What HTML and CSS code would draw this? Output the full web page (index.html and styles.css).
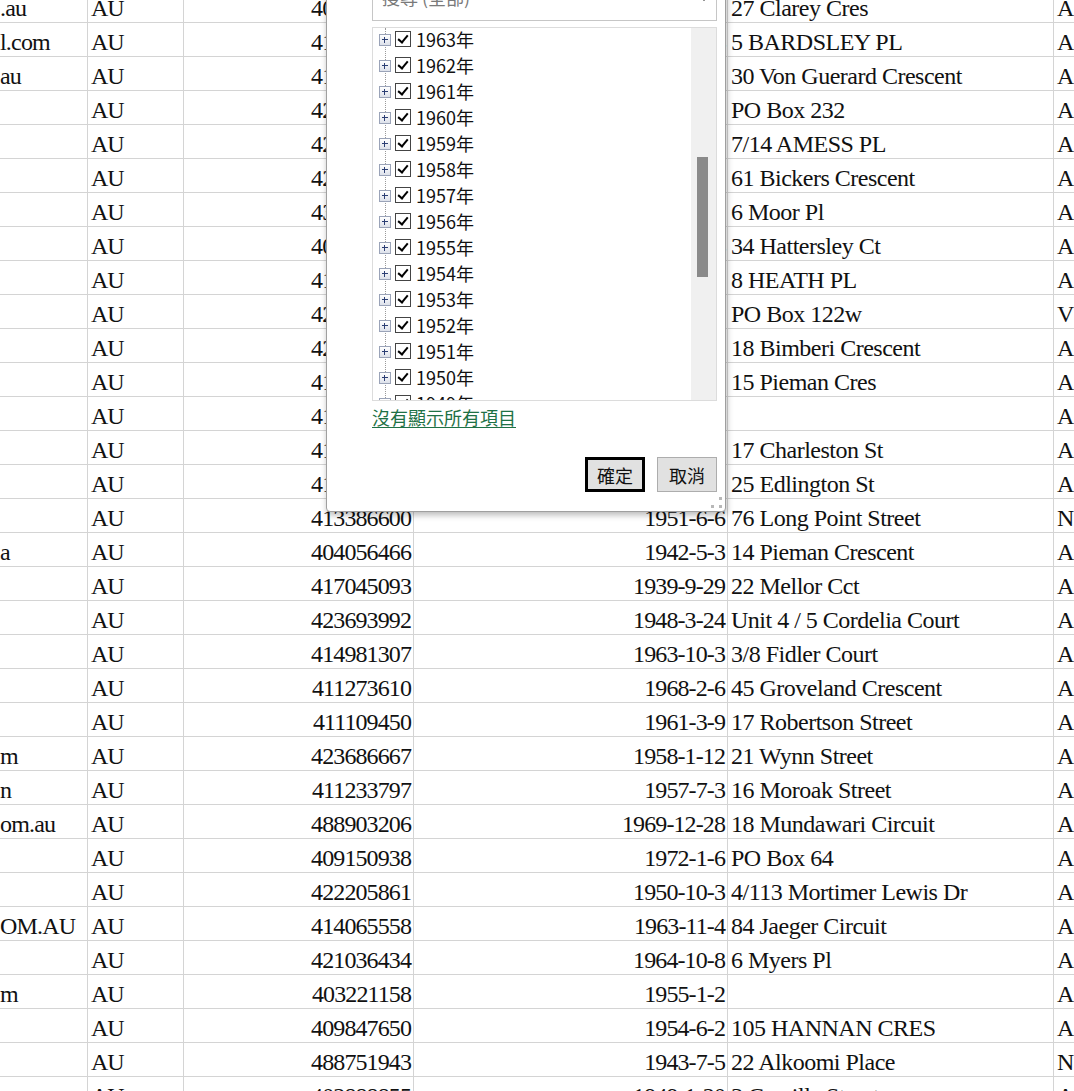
FILE: index.html
```html
<!DOCTYPE html>
<html lang="zh-Hant">
<head>
<meta charset="utf-8">
<title>聯絡人清單</title>
<link rel="stylesheet" href="styles.css">
</head>
<body>
<div class="sheet">
  <div class="row"><div class="c a">.au</div><div class="c b">AU</div><div class="c n">404518872</div><div class="c n">1956-4-11</div><div class="c e">27 Clarey Cres</div><div class="c f">ACT</div></div>
  <div class="row"><div class="c a">l.com</div><div class="c b">AU</div><div class="c n">415208933</div><div class="c n">1960-2-14</div><div class="c e">5 BARDSLEY PL</div><div class="c f">ACT</div></div>
  <div class="row"><div class="c a">au</div><div class="c b">AU</div><div class="c n">418872205</div><div class="c n">1953-8-1</div><div class="c e">30 Von Guerard Crescent</div><div class="c f">ACT</div></div>
  <div class="row"><div class="c a"></div><div class="c b">AU</div><div class="c n">421907546</div><div class="c n">1962-5-19</div><div class="c e">PO Box 232</div><div class="c f">ACT</div></div>
  <div class="row"><div class="c a"></div><div class="c b">AU</div><div class="c n">425310884</div><div class="c n">1958-11-7</div><div class="c e">7/14 AMESS PL</div><div class="c f">ACT</div></div>
  <div class="row"><div class="c a"></div><div class="c b">AU</div><div class="c n">422761390</div><div class="c n">1955-3-22</div><div class="c e">61 Bickers Crescent</div><div class="c f">ACT</div></div>
  <div class="row"><div class="c a"></div><div class="c b">AU</div><div class="c n">431048226</div><div class="c n">1961-7-30</div><div class="c e">6 Moor Pl</div><div class="c f">ACT</div></div>
  <div class="row"><div class="c a"></div><div class="c b">AU</div><div class="c n">409623178</div><div class="c n">1957-9-4</div><div class="c e">34 Hattersley Ct</div><div class="c f">ACT</div></div>
  <div class="row"><div class="c a"></div><div class="c b">AU</div><div class="c n">413550921</div><div class="c n">1950-12-9</div><div class="c e">8 HEATH PL</div><div class="c f">ACT</div></div>
  <div class="row"><div class="c a"></div><div class="c b">AU</div><div class="c n">428144063</div><div class="c n">1963-1-25</div><div class="c e">PO Box 122w</div><div class="c f">VIC</div></div>
  <div class="row"><div class="c a"></div><div class="c b">AU</div><div class="c n">421679305</div><div class="c n">1954-10-16</div><div class="c e">18 Bimberi Crescent</div><div class="c f">ACT</div></div>
  <div class="row"><div class="c a"></div><div class="c b">AU</div><div class="c n">417302558</div><div class="c n">1959-6-2</div><div class="c e">15 Pieman Cres</div><div class="c f">ACT</div></div>
  <div class="row"><div class="c a"></div><div class="c b">AU</div><div class="c n">412885147</div><div class="c n">1952-4-27</div><div class="c e"></div><div class="c f">ACT</div></div>
  <div class="row"><div class="c a"></div><div class="c b">AU</div><div class="c n">414069832</div><div class="c n">1956-8-13</div><div class="c e">17 Charleston St</div><div class="c f">ACT</div></div>
  <div class="row"><div class="c a"></div><div class="c b">AU</div><div class="c n">419237716</div><div class="c n">1960-9-8</div><div class="c e">25 Edlington St</div><div class="c f">ACT</div></div>
  <div class="row"><div class="c a"></div><div class="c b">AU</div><div class="c n">413386600</div><div class="c n">1951-6-6</div><div class="c e">76 Long Point Street</div><div class="c f">NSW</div></div>
  <div class="row"><div class="c a">a</div><div class="c b">AU</div><div class="c n">404056466</div><div class="c n">1942-5-3</div><div class="c e">14 Pieman Crescent</div><div class="c f">ACT</div></div>
  <div class="row"><div class="c a"></div><div class="c b">AU</div><div class="c n">417045093</div><div class="c n">1939-9-29</div><div class="c e">22 Mellor Cct</div><div class="c f">ACT</div></div>
  <div class="row"><div class="c a"></div><div class="c b">AU</div><div class="c n">423693992</div><div class="c n">1948-3-24</div><div class="c e">Unit 4 / 5 Cordelia Court</div><div class="c f">ACT</div></div>
  <div class="row"><div class="c a"></div><div class="c b">AU</div><div class="c n">414981307</div><div class="c n">1963-10-3</div><div class="c e">3/8 Fidler Court</div><div class="c f">ACT</div></div>
  <div class="row"><div class="c a"></div><div class="c b">AU</div><div class="c n">411273610</div><div class="c n">1968-2-6</div><div class="c e">45 Groveland Crescent</div><div class="c f">ACT</div></div>
  <div class="row"><div class="c a"></div><div class="c b">AU</div><div class="c n">411109450</div><div class="c n">1961-3-9</div><div class="c e">17 Robertson Street</div><div class="c f">ACT</div></div>
  <div class="row"><div class="c a">m</div><div class="c b">AU</div><div class="c n">423686667</div><div class="c n">1958-1-12</div><div class="c e">21 Wynn Street</div><div class="c f">ACT</div></div>
  <div class="row"><div class="c a">n</div><div class="c b">AU</div><div class="c n">411233797</div><div class="c n">1957-7-3</div><div class="c e">16 Moroak Street</div><div class="c f">ACT</div></div>
  <div class="row"><div class="c a">om.au</div><div class="c b">AU</div><div class="c n">488903206</div><div class="c n">1969-12-28</div><div class="c e">18 Mundawari Circuit</div><div class="c f">ACT</div></div>
  <div class="row"><div class="c a"></div><div class="c b">AU</div><div class="c n">409150938</div><div class="c n">1972-1-6</div><div class="c e">PO Box 64</div><div class="c f">ACT</div></div>
  <div class="row"><div class="c a"></div><div class="c b">AU</div><div class="c n">422205861</div><div class="c n">1950-10-3</div><div class="c e">4/113 Mortimer Lewis Dr</div><div class="c f">ACT</div></div>
  <div class="row"><div class="c a">OM.AU</div><div class="c b">AU</div><div class="c n">414065558</div><div class="c n">1963-11-4</div><div class="c e">84 Jaeger Circuit</div><div class="c f">ACT</div></div>
  <div class="row"><div class="c a"></div><div class="c b">AU</div><div class="c n">421036434</div><div class="c n">1964-10-8</div><div class="c e">6 Myers Pl</div><div class="c f">ACT</div></div>
  <div class="row"><div class="c a">m</div><div class="c b">AU</div><div class="c n">403221158</div><div class="c n">1955-1-2</div><div class="c e"></div><div class="c f">ACT</div></div>
  <div class="row"><div class="c a"></div><div class="c b">AU</div><div class="c n">409847650</div><div class="c n">1954-6-2</div><div class="c e">105 HANNAN CRES</div><div class="c f">ACT</div></div>
  <div class="row"><div class="c a"></div><div class="c b">AU</div><div class="c n">488751943</div><div class="c n">1943-7-5</div><div class="c e">22 Alkoomi Place</div><div class="c f">NSW</div></div>
  <div class="row"><div class="c a"></div><div class="c b">AU</div><div class="c n">402888855</div><div class="c n">1949-1-20</div><div class="c e">3 Camilla Street</div><div class="c f">ACT</div></div>
</div>

<!-- AutoFilter dropdown for the birth-date column -->
<div class="filter">
  <div class="search">
    <span class="search-text">搜尋 (全部)</span>
    <svg class="search-arrow" width="14" height="10" viewBox="0 0 14 10"><path d="M1 1 L13 1 L7 8 Z" fill="#111"/></svg>
  </div>

  <div class="tree">
    <div class="tree-line"></div>
    <ul class="items">
      <li class="item"><span class="exp"></span><span class="cb"></span><span class="label">1963年</span></li>
      <li class="item"><span class="exp"></span><span class="cb"></span><span class="label">1962年</span></li>
      <li class="item"><span class="exp"></span><span class="cb"></span><span class="label">1961年</span></li>
      <li class="item"><span class="exp"></span><span class="cb"></span><span class="label">1960年</span></li>
      <li class="item"><span class="exp"></span><span class="cb"></span><span class="label">1959年</span></li>
      <li class="item"><span class="exp"></span><span class="cb"></span><span class="label">1958年</span></li>
      <li class="item"><span class="exp"></span><span class="cb"></span><span class="label">1957年</span></li>
      <li class="item"><span class="exp"></span><span class="cb"></span><span class="label">1956年</span></li>
      <li class="item"><span class="exp"></span><span class="cb"></span><span class="label">1955年</span></li>
      <li class="item"><span class="exp"></span><span class="cb"></span><span class="label">1954年</span></li>
      <li class="item"><span class="exp"></span><span class="cb"></span><span class="label">1953年</span></li>
      <li class="item"><span class="exp"></span><span class="cb"></span><span class="label">1952年</span></li>
      <li class="item"><span class="exp"></span><span class="cb"></span><span class="label">1951年</span></li>
      <li class="item"><span class="exp"></span><span class="cb"></span><span class="label">1950年</span></li>
      <li class="item"><span class="exp"></span><span class="cb"></span><span class="label">1949年</span></li>
    </ul>
    <div class="scrollbar"><div class="thumb"></div></div>
  </div>

  <a class="more" href="#">沒有顯示所有項目</a>

  <div class="buttons">
    <button class="btn default">確定</button>
    <button class="btn">取消</button>
  </div>

  <svg class="grip" width="14" height="14" viewBox="0 0 14 14">
    <rect x="9" y="1" width="3" height="3" fill="#b8b8b8"/>
    <rect x="1" y="9" width="3" height="3" fill="#b8b8b8"/>
    <rect x="9" y="9" width="3" height="3" fill="#b8b8b8"/>
  </svg>
</div>
</body>
</html>
```

FILE: styles.css
```css
html, body {
  margin: 0;
  padding: 0;
  background: #fff;
  overflow: hidden;
}

body {
  position: relative;
  width: 1074px;
  height: 1091px;
}

/* ---------- worksheet ---------- */
.sheet {
  margin-top: -11px;
  font-family: "Liberation Serif", "Times New Roman", serif;
  font-size: 24px;
  letter-spacing: -0.5px;
  color: #111;
}

.row {
  display: grid;
  grid-template-columns: 88px 96px 230px 314px 326px 1fr;
  height: 34px;
}

.c {
  box-sizing: border-box;
  height: 34px;
  border-right: 1px solid #d4d4d4;
  border-bottom: 1px solid #d4d4d4;
  padding: 5px 3px 0 3px;
  line-height: 28px;
  white-space: nowrap;
  overflow: hidden;
}

.c.a { padding-left: 0; letter-spacing: -0.8px; }
.c.b { letter-spacing: -1.2px; }
.c.n { text-align: right; padding-right: 2px; letter-spacing: -0.9px; }
.c.f { border-right: none; }

/* ---------- filter dropdown ---------- */
.filter {
  position: absolute;
  left: 326px;
  top: -14px;
  width: 400px;
  height: 526px;
  box-sizing: border-box;
  padding: 0 8px 0 45px;
  background: #fff;
  border: 1px solid #9f9f9f;
  border-radius: 0 0 4px 4px;
  box-shadow: 1px 3px 6px rgba(0, 0, 0, 0.28);
  display: flex;
  flex-direction: column;
  font-family: "Noto Sans CJK TC", "Noto Sans", sans-serif;
  font-size: 18px;
  color: #111;
}

.search {
  position: relative;
  box-sizing: border-box;
  height: 34px;
  border: 1px solid #c6c6c6;
  border-top: none;
  display: flex;
  align-items: flex-start;
  padding-left: 9px;
}

.search-text {
  color: #7a7a7a;
  line-height: 20px;
}

.search-arrow {
  position: absolute;
  right: 5px;
  top: 6px;
}

.tree {
  position: relative;
  margin-top: 6px;
  height: 374px;
  box-sizing: border-box;
  border: 1px solid #dcdcdc;
  overflow: hidden;
}

.tree-line {
  position: absolute;
  left: 12px;
  top: 0;
  bottom: 0;
  border-left: 1px dotted #9a9a9a;
}

.items {
  list-style: none;
  margin: -2px 0 0 0;
  padding: 0;
  position: relative;
}

.item {
  height: 26px;
  display: flex;
  align-items: center;
  padding-left: 6px;
}

/* expand box [+] */
.exp {
  position: relative;
  width: 12px;
  height: 12px;
  box-sizing: border-box;
  border: 1px solid #9aa3b8;
  background: linear-gradient(#ffffff, #dde1ea);
  margin-top: 2px;
}

.exp::before,
.exp::after {
  content: "";
  position: absolute;
  background: #2c3f74;
}

.exp::before { left: 2px; top: 4px; width: 6px; height: 1px; }
.exp::after { left: 4px; top: 2px; width: 1px; height: 6px; }

/* checked checkbox */
.cb {
  position: relative;
  width: 16px;
  height: 16px;
  box-sizing: border-box;
  border: 1px solid #444;
  background: #fff;
  margin-left: 4px;
}

.cb::after {
  content: "";
  position: absolute;
  left: 4px;
  top: 1px;
  width: 4px;
  height: 8px;
  border-right: 2px solid #000;
  border-bottom: 2px solid #000;
  transform: rotate(40deg);
}

.label {
  margin-left: 5px;
  line-height: 26px;
}

.scrollbar {
  position: absolute;
  top: 0;
  right: 0;
  bottom: 0;
  width: 25px;
  background: #f0f0f0;
}

.thumb {
  position: absolute;
  left: 6px;
  top: 129px;
  width: 11px;
  height: 120px;
  background: #8a8a8a;
}

.more {
  margin-top: 6px;
  align-self: flex-start;
  line-height: 20px;
  color: #1e7145;
  text-decoration: underline;
  text-underline-offset: 2px;
}

.buttons {
  margin-top: 30px;
  display: flex;
  justify-content: flex-end;
  gap: 12px;
}

.btn {
  box-sizing: border-box;
  width: 60px;
  height: 35px;
  padding: 0;
  background: #e1e1e1;
  border: 1px solid #adadad;
  font-family: inherit;
  font-size: 18px;
  color: #111;
}

.btn.default {
  border: 3px solid #000;
}

.grip {
  position: absolute;
  right: 1px;
  bottom: 1px;
}
```
